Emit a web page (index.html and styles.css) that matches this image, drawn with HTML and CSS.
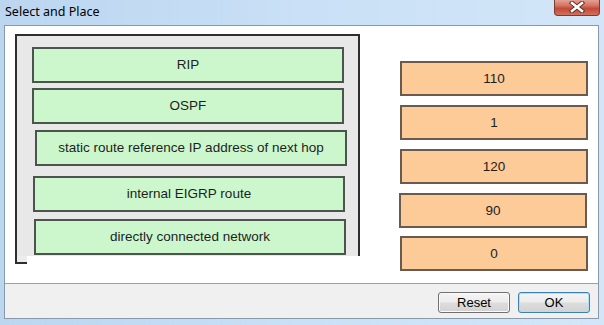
FILE: index.html
```html
<!DOCTYPE html>
<html>
<head>
<meta charset="utf-8">
<link rel="stylesheet" href="styles.css">
</head>
<body>
<div class="window">
  <div class="titlebar">
    <span class="title">Select and Place</span>
    <div class="close">
      <svg width="20" height="12" viewBox="0 0 20 12">
        <path d="M5 2 L15 10 M15 2 L5 10" stroke="#5a2b24" stroke-width="4.4" stroke-linecap="square" fill="none"/>
        <path d="M5 2 L15 10 M15 2 L5 10" stroke="#ffffff" stroke-width="2.6" stroke-linecap="square" fill="none"/>
      </svg>
    </div>
  </div>
  <div class="client">
    <div class="stage">
      <div class="source">
        <div class="item green">RIP</div>
        <div class="item green">OSPF</div>
        <div class="item green">static route reference IP address of next hop</div>
        <div class="item green">internal EIGRP route</div>
        <div class="item green">directly connected network</div>
      </div>
      <div class="targets">
        <div class="item orange">110</div>
        <div class="item orange">1</div>
        <div class="item orange">120</div>
        <div class="item orange">90</div>
        <div class="item orange">0</div>
      </div>
    </div>
    <div class="footer">
      <button class="btn">Reset</button>
      <button class="btn ok">OK</button>
    </div>
  </div>
</div>
</body>
</html>
```

FILE: styles.css
```css
html, body {
  margin: 0;
  padding: 0;
}
body {
  width: 604px;
  height: 325px;
  overflow: hidden;
  background: #c3dcf3;
}
.window {
  width: 604px;
  height: 325px;
  box-sizing: border-box;
  padding: 0 5px 0 4px;
  background: linear-gradient(to right, #bcd6f0 0%, #c9e0f6 50%, #d3e6f8 100%);
}
.titlebar {
  height: 25px;
  position: relative;
}
.title {
  position: absolute;
  left: 1px;
  top: 3px;
  font-family: "Noto Sans", "DejaVu Sans", sans-serif;
  font-size: 12.5px;
  color: #000;
}
.close {
  position: absolute;
  right: -1px;
  top: -1px;
  width: 46px;
  height: 17px;
  box-sizing: border-box;
  border: 1px solid #7c3b31;
  border-top: none;
  border-radius: 0 0 4px 4px;
  background: linear-gradient(to bottom, #e7a99d 0%, #d47565 40%, #c44a38 60%, #d3705c 100%);
  display: flex;
  align-items: center;
  justify-content: center;
}
.client {
  height: 294px;
  box-sizing: border-box;
  border: 1px solid #8999a9;
  display: flex;
  flex-direction: column;
}
.stage {
  background: #fff;
  display: flex;
  align-items: flex-start;
  padding: 8px 0 0 10px;
  box-sizing: border-box;
  border-bottom: 1px solid #a0a0a0;
  height: 258px;
}
.source {
  position: relative;
  width: 345px;
  height: 222px;
  box-sizing: border-box;
  border: 2px solid #2e2e2e;
  border-bottom: none;
  background: #e8e8e8;
  padding: 11px 0 0 15px;
}
.source::after {
  content: "";
  position: absolute;
  left: -2px;
  top: 100%;
  width: 10px;
  height: 6px;
  border-left: 2px solid #2e2e2e;
  border-bottom: 2px solid #2e2e2e;
  background: #ececec;
}
.item {
  box-sizing: border-box;
  display: flex;
  align-items: center;
  justify-content: center;
  font-family: "Liberation Sans", Arial, sans-serif;
  font-size: 13.5px;
  color: #1e1e1e;
  padding-bottom: 1px;
}
.green {
  width: 312px;
  height: 36px;
  background: #ccf7cc;
  border: 2px solid #4d534d;
}
.green:nth-child(2) { margin-top: 5px; }
.green:nth-child(3) { margin-top: 6px; margin-left: 3px; }
.green:nth-child(4) { margin-top: 10px; margin-left: 1px; }
.green:nth-child(5) { margin-top: 7px; margin-left: 2px; }
.targets {
  margin-left: 40px;
  margin-top: 27px;
  display: flex;
  flex-direction: column;
  gap: 9px;
}
.orange {
  width: 188px;
  height: 35px;
  background: #fccb98;
  border: 2px solid #6b5b4e;
}
.orange:nth-child(4) { margin-left: -1px; }
.orange:nth-child(5) { margin-top: -1px; }
.footer {
  flex: 1;
  background: #f0f0f0;
  display: flex;
  justify-content: flex-end;
  align-items: flex-start;
  gap: 8px;
  padding: 8px 8px 0 0;
}
.btn {
  width: 72px;
  height: 21px;
  box-sizing: border-box;
  margin: 0;
  padding: 0;
  border: 1px solid #707070;
  border-radius: 3px;
  background: linear-gradient(to bottom, #f4f4f4 0%, #ececec 48%, #dddddd 52%, #d2d2d2 100%);
  font-family: "Liberation Sans", Arial, sans-serif;
  font-size: 13px;
  color: #000;
  box-shadow: inset 0 0 0 1px #fafafa;
}
.ok {
  border-color: #3c7fb1;
  box-shadow: inset 0 0 0 1px #a8e2f7;
}
```
